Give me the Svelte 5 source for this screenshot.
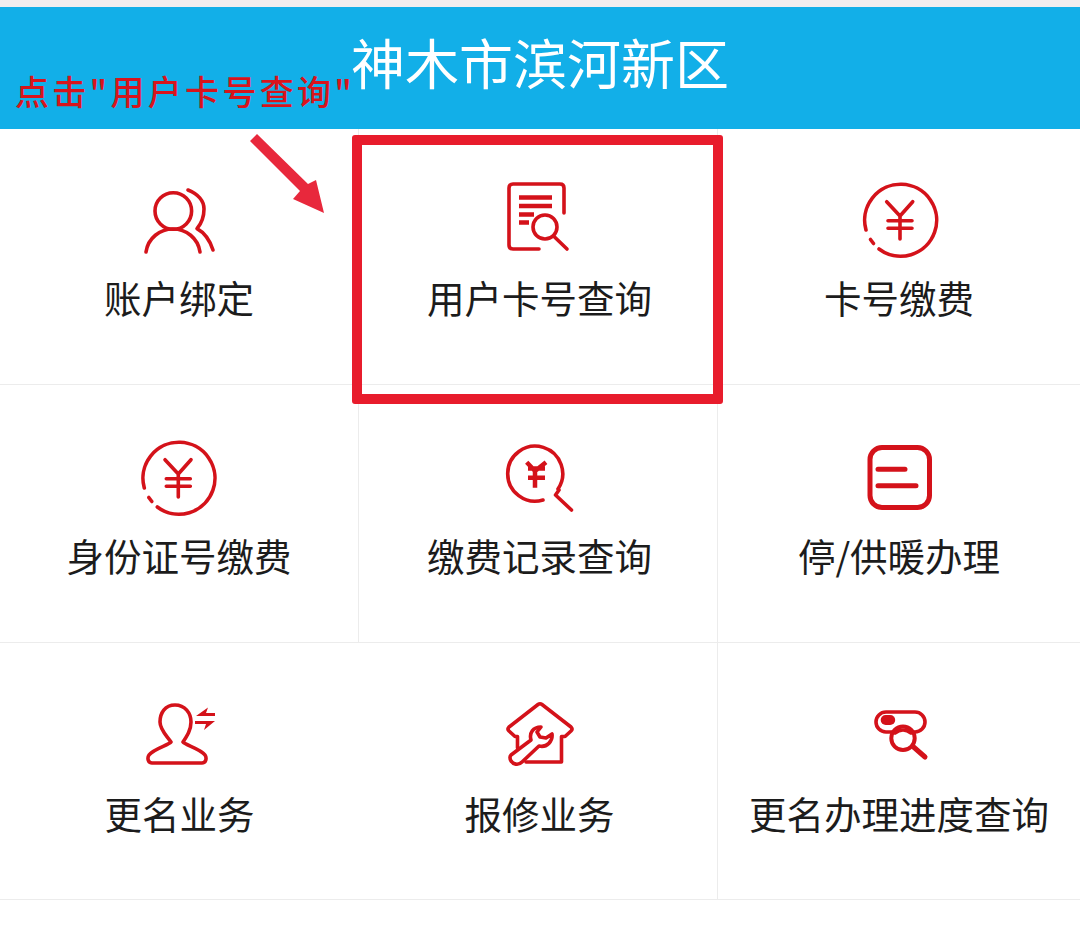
<script>
	// icons are drawn in the pixel space of the crop they were measured from,
	// the viewBox shifts them into place inside the 100x90 icon box
</script>

{#snippet yuan()}
	<path d="M16 60 A36 36 0 1 1 29 79" />
	<path d="M20.5 69.5 L23.5 73.5" />
	<path d="M36.7 31.7 L50 46 L62.7 31.7 M50 46 V69 M38 50.7 H62 M38 58.3 H62" />
{/snippet}

{#snippet cell(label, box, icon)}
	<div class="cell">
		<svg class="icon" viewBox={box} width="100" height="90">{@render icon()}</svg>
		<span class="label">{label}</span>
	</div>
{/snippet}

{#snippet account()}
	<circle cx="43.3" cy="35" r="18.3" />
	<path d="M16 76 C18 62 30 53 43 53 C56 53 68 62 70 76" />
	<path d="M58 14 C68 18 74 25 74 33 C74 41 71 48 67 52.7 C75 57 80 65 83 74" />
{/snippet}

{#snippet query()}
	<path d="M59 79 H33 Q29 79 29 75 V18 Q29 14 33 14 H80 Q84 14 84 18 V43" />
	<path class="thick" d="M39 27.5 H72 M39 36 H72 M39 44.5 H54 M39 52.5 H49" />
	<circle cx="65" cy="57" r="12" />
	<path d="M73.5 66 L87 79" />
{/snippet}

{#snippet record()}
	<path d="M53 65 A27.5 27.5 0 1 1 68 54" />
	<path d="M69 55 L65.5 60 L81.5 75" />
	<path class="thick" d="M36.7 27.3 L45 36 L56 27.3 M38 33.5 H55 M38 42.7 H55 M45 36 V52.7" />
{/snippet}

{#snippet heating()}
	<rect class="thicker" x="20" y="12.5" width="59.5" height="60" rx="12" />
	<path class="thicker" d="M28 34.3 H55 M28 50.7 H66" />
{/snippet}

{#snippet rename()}
	<path d="M44 10 C34 10 29 18 29 27 C29 35 36 41 40 47 C38 50 22 54 18 60 C16 63 17 68 21 68 H71 C75 68 76 63 74 60 C70 54 54 50 52 47 C56 41 60 35 60 27 C60 18 54 10 44 10 Z" />
	<path class="solid" d="M65 21 L77 12.5 L75 18 H84 V21 Z M64 26 H84 L73 35 L75 29 H64 Z" />
{/snippet}

{#snippet repair()}
	<path d="M27.5 53 V41.5 H25 L19 36 Q17 34 19 32 L48 9.5 Q50 8 52 9.5 L81 32 Q83 34 81 36 L75 41.5 H71.5 V67 H36" />
	<path d="M21 60 L41 45 C39 38 43 32 51 32 L47 37 L50 42 L56 43 L62 39 C63 46 57 53 49 51 L32 67 C28 71 23 69 21 66 C20 64 19 62 21 60 Z" />
{/snippet}

{#snippet progress()}
	<rect x="26" y="17" width="49" height="20" rx="10" />
	<rect class="solid" x="30.7" y="20" width="14.5" height="10" rx="5" />
	<circle class="lens" cx="53" cy="43.3" r="11.7" />
	<path d="M45 38 Q53 32 61 38" />
	<path class="thicker" d="M63 51.5 L75 62" />
{/snippet}

<div class="page">
	<div class="strip"></div>
	<header>
		<h1>神木市滨河新区</h1>
		<span class="hint">点击"用户卡号查询"</span>
	</header>

	<div class="grid">
		{@render cell("账户绑定", "-1 0 100 90", account)}
		{@render cell("用户卡号查询", "8 6 100 90", query)}
		{@render cell("卡号缴费", "-1 6 100 90", yuan)}
		{@render cell("身份证号缴费", "0.7 4 100 90", yuan)}
		{@render cell("缴费记录查询", "-2 -3 100 90", record)}
		{@render cell("停/供暖办理", "-1 -3 100 90", heating)}
		{@render cell("更名业务", "-1 -5 100 90", rename)}
		{@render cell("报修业务", "-2 -5 100 90", repair)}
		{@render cell("更名办理进度查询", "-1 -5 100 90", progress)}
	</div>

	<div class="highlight"></div>
	<svg class="arrow" width="90" height="90" viewBox="0 0 90 90">
		<path d="M7 1 L0 8 L50 58 L43 66 L74 80 L66 47 L58 51 Z" />
	</svg>
</div>

<style>
	:global(body) {
		background: #fff;
	}

	.page {
		position: relative;
		width: 1080px;
		height: 927px;
		background: #fff;
		overflow: hidden;
		font-family: "Noto Sans CJK SC", "Noto Sans", sans-serif;
	}

	.strip {
		height: 7px;
		background: #f1eeef;
	}

	header {
		position: relative;
		height: 122px;
		background: #12afe8;
		display: flex;
		align-items: center;
		justify-content: center;
	}

	h1 {
		margin: 0 0 13px;
		color: #fff;
		font-size: 54px;
		font-weight: 400;
		line-height: 1;
	}

	.hint {
		position: absolute;
		left: 15px;
		top: 62px;
		color: #d8141c;
		font-size: 34px;
		font-weight: 500;
		line-height: 44px;
		letter-spacing: 3.3px;
		white-space: nowrap;
	}

	.grid {
		display: grid;
		grid-template-columns: 359px 359px 362px;
		grid-template-rows: 256px 258px 257px;
	}

	.cell {
		display: flex;
		flex-direction: column;
		align-items: center;
		padding-top: 47px;
		border-right: 1px solid #ececec;
		border-bottom: 1px solid #ececec;
	}

	.cell:nth-child(3n),
	.cell:nth-child(7) {
		border-right: none;
	}

	.icon {
		fill: none;
		stroke: #d4121a;
		stroke-width: 3.6;
		stroke-linecap: round;
		stroke-linejoin: round;
	}

	.icon :global(.thick) {
		stroke-width: 4.5;
		stroke-linecap: butt;
	}

	.icon :global(.thicker) {
		stroke-width: 5;
	}

	.icon :global(.solid) {
		fill: #d4121a;
		stroke: none;
	}

	.icon :global(.lens) {
		fill: #fff;
		stroke-width: 4;
	}

	.label {
		margin-top: 8px;
		color: #1c1c1c;
		font-size: 37.5px;
		font-weight: 400;
		line-height: 50px;
		white-space: nowrap;
	}

	.cell:nth-child(-n+3) .label {
		margin-top: 6px;
	}

	.cell:nth-child(3n+2) .label {
		padding-left: 3px;
	}

	.highlight {
		position: absolute;
		left: 352px;
		top: 135px;
		width: 371px;
		height: 269px;
		box-sizing: border-box;
		border: 10px solid #e81c2c;
		border-radius: 3px;
	}

	.arrow {
		position: absolute;
		left: 250px;
		top: 133px;
		fill: #e8283c;
	}
</style>
